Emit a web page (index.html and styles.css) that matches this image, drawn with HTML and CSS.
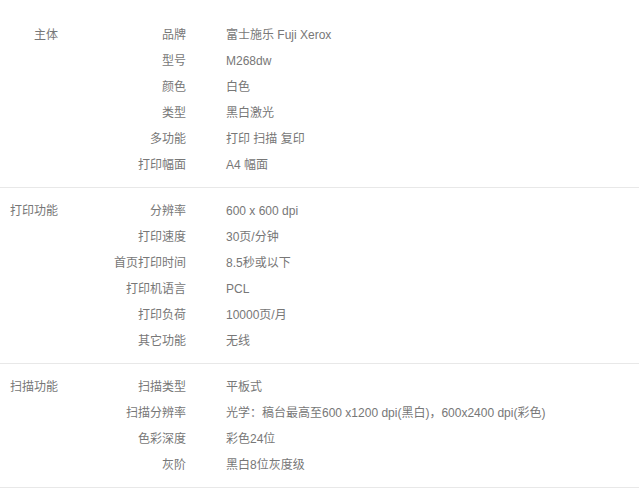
FILE: index.html
```html
<!DOCTYPE html>
<html lang="zh-CN">
<head>
  <meta charset="UTF-8" />
  <title>规格参数</title>
  <link rel="stylesheet" href="styles.css">
</head>
<body>

  <div class="spec-table">
    <div class="spec-group">
      <div class="group-name">主体</div>
      <dl class="spec-list">
        <dt>品牌</dt><dd>富士施乐 Fuji Xerox</dd>
        <dt>型号</dt><dd>M268dw</dd>
        <dt>颜色</dt><dd>白色</dd>
        <dt>类型</dt><dd>黑白激光</dd>
        <dt>多功能</dt><dd>打印 扫描 复印</dd>
        <dt>打印幅面</dt><dd>A4 幅面</dd>
      </dl>
    </div>

    <div class="spec-group">
      <div class="group-name">打印功能</div>
      <dl class="spec-list">
        <dt>分辨率</dt><dd>600 x 600 dpi</dd>
        <dt>打印速度</dt><dd>30页/分钟</dd>
        <dt>首页打印时间</dt><dd>8.5秒或以下</dd>
        <dt>打印机语言</dt><dd>PCL</dd>
        <dt>打印负荷</dt><dd>10000页/月</dd>
        <dt>其它功能</dt><dd>无线</dd>
      </dl>
    </div>

    <div class="spec-group">
      <div class="group-name">扫描功能</div>
      <dl class="spec-list">
        <dt>扫描类型</dt><dd>平板式</dd>
        <dt>扫描分辨率</dt><dd>光学：稿台最高至600 x1200 dpi(黑白)，600x2400 dpi(彩色)</dd>
        <dt>色彩深度</dt><dd>彩色24位</dd>
        <dt>灰阶</dt><dd>黑白8位灰度级</dd>
      </dl>
    </div>
  </div>

</body>
</html>
```

FILE: styles.css
```css
body {
  margin: 0;
  padding-top: 12px;
  background: #fff;
  font-family: "Liberation Sans", "Noto Sans CJK SC", sans-serif;
  font-size: 12px;
  color: #777;
}

.spec-group {
  display: flex;
  padding: 10px 0 9px;
  border-bottom: 1px solid #e8e8e8;
}

.group-name {
  width: 58px;
  flex-shrink: 0;
  text-align: right;
  line-height: 26px;
}

.spec-list {
  margin: 0;
  display: grid;
  grid-template-columns: 128px 1fr;
  column-gap: 40px;
  line-height: 26px;
}

.spec-list dt {
  text-align: right;
}

.spec-list dd {
  margin: 0;
}
```
